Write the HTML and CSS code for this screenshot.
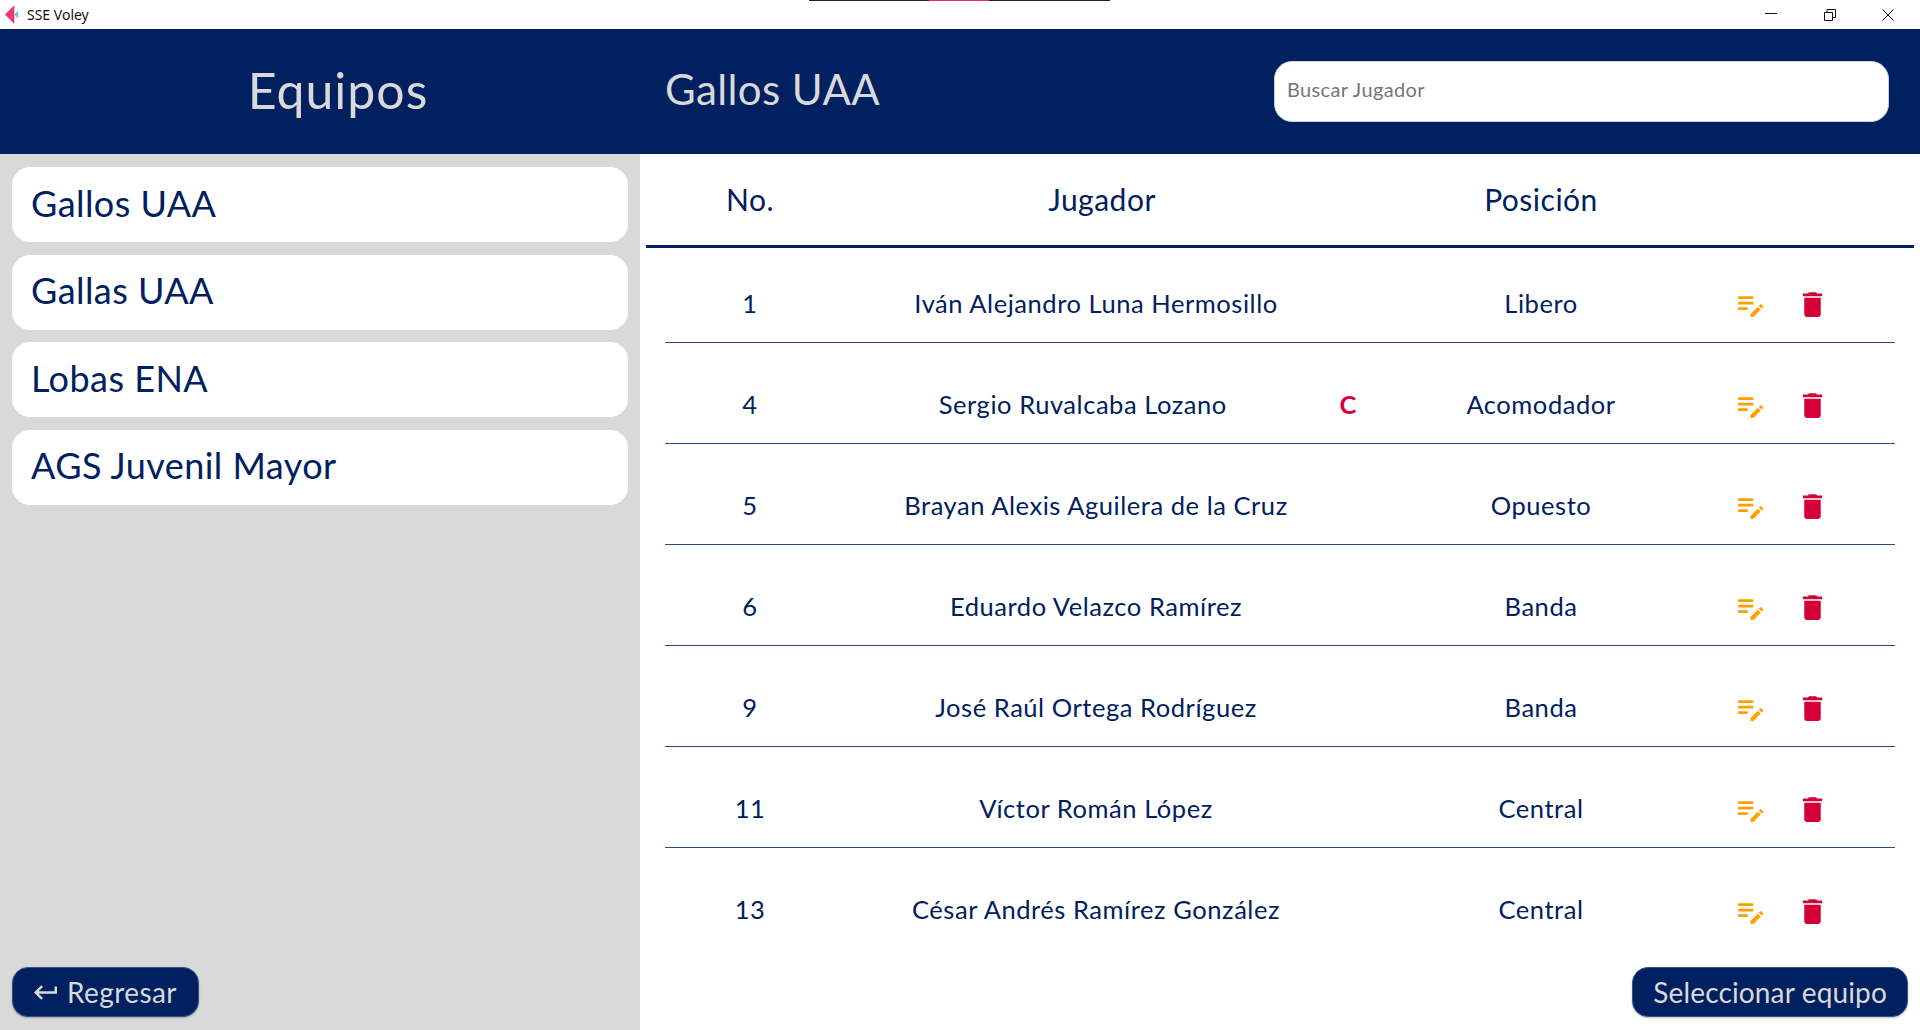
FILE: index.html
```html
<!DOCTYPE html>
<html lang="es">
<head>
  <meta charset="UTF-8" />
  <title>SSE Voley</title>
  <link rel="stylesheet" href="styles.css">
</head>
<body>
  <svg class="defs" width="0" height="0">
    <symbol id="i-edit" viewBox="0 0 24 24">
      <path d="M3 10h11v2H3zM3 8h11V6H3zM3 16h7v-2H3zM18.01 12.87l.71-.71c.39-.39 1.02-.39 1.41 0l.71.71c.39.39.39 1.02 0 1.41l-.71.71zM17.3 13.58 12 18.88V21h2.12l5.3-5.3z" />
    </symbol>
    <symbol id="i-delete" viewBox="0 0 24 24">
      <path d="M6 19c0 1.1.9 2 2 2h8c1.1 0 2-.9 2-2V7H6zM19 4h-3.5l-1-1h-5l-1 1H5v2h14z" />
    </symbol>
  </svg>

  <div class="titlebar">
    <div class="app-name">
      <svg class="app-icon" viewBox="0 0 16 20">
        <path d="M11 0v20L1 10z" fill="#f0386f" />
        <path d="M15 6v8l-4-4z" fill="#5cc3ea" />
      </svg>
      <span>SSE Voley</span>
    </div>
    <div class="progress"><span></span></div>
    <div class="win-controls">
      <svg viewBox="0 0 12 12"><path d="M0 4.500h12" /></svg>
      <svg viewBox="0 0 12 12"><path d="M.5 3.500h8v8h-8zM3 3.500V.5h8.500v8h-3" /></svg>
      <svg viewBox="0 0 12 12"><path d="M.5.5l11 11M11.500.5l-11 11" /></svg>
    </div>
  </div>

  <header class="top">
    <div class="top-left"><h1>Equipos</h1></div>
    <div class="top-right">
      <h2>Gallos UAA</h2>
      <input class="search" type="text" placeholder="Buscar Jugador" />
    </div>
  </header>

  <div class="content">
    <aside class="sidebar">
      <ul class="teams">
        <li>Gallos UAA</li>
        <li>Gallas UAA</li>
        <li>Lobas ENA</li>
        <li>AGS Juvenil Mayor</li>
      </ul>
      <div class="side-foot">
        <button class="btn btn-back">
          <svg class="back" viewBox="2 6 19 12"><path d="M19 7v4H5.830l3.580-3.590L8 6l-6 6 6 6 1.410-1.410L5.830 13H21V7z" /></svg>
          Regresar
        </button>
      </div>
    </aside>

    <main class="roster">
      <div class="thead">
        <div>No.</div>
        <div>Jugador</div>
        <div>Posición</div>
      </div>
      <div class="rows">
        <div class="row">
          <div class="cell">1</div>
          <div class="cell">Iván Alejandro Luna Hermosillo</div>
          <div class="cell">Libero</div>
          <div class="actions">
            <svg class="edit"><use href="#i-edit" /></svg>
            <svg class="delete"><use href="#i-delete" /></svg>
          </div>
        </div>
        <div class="row">
          <div class="cell">4</div>
          <div class="cell player">
            <span class="player-name">Sergio Ruvalcaba Lozano</span>
            <span class="captain">C</span>
          </div>
          <div class="cell">Acomodador</div>
          <div class="actions">
            <svg class="edit"><use href="#i-edit" /></svg>
            <svg class="delete"><use href="#i-delete" /></svg>
          </div>
        </div>
        <div class="row">
          <div class="cell">5</div>
          <div class="cell">Brayan Alexis Aguilera de la Cruz</div>
          <div class="cell">Opuesto</div>
          <div class="actions">
            <svg class="edit"><use href="#i-edit" /></svg>
            <svg class="delete"><use href="#i-delete" /></svg>
          </div>
        </div>
        <div class="row">
          <div class="cell">6</div>
          <div class="cell">Eduardo Velazco Ramírez</div>
          <div class="cell">Banda</div>
          <div class="actions">
            <svg class="edit"><use href="#i-edit" /></svg>
            <svg class="delete"><use href="#i-delete" /></svg>
          </div>
        </div>
        <div class="row">
          <div class="cell">9</div>
          <div class="cell">José Raúl Ortega Rodríguez</div>
          <div class="cell">Banda</div>
          <div class="actions">
            <svg class="edit"><use href="#i-edit" /></svg>
            <svg class="delete"><use href="#i-delete" /></svg>
          </div>
        </div>
        <div class="row">
          <div class="cell">11</div>
          <div class="cell">Víctor Román López</div>
          <div class="cell">Central</div>
          <div class="actions">
            <svg class="edit"><use href="#i-edit" /></svg>
            <svg class="delete"><use href="#i-delete" /></svg>
          </div>
        </div>
        <div class="row last">
          <div class="cell">13</div>
          <div class="cell">César Andrés Ramírez González</div>
          <div class="cell">Central</div>
          <div class="actions">
            <svg class="edit"><use href="#i-edit" /></svg>
            <svg class="delete"><use href="#i-delete" /></svg>
          </div>
        </div>
      </div>
      <div class="roster-foot">
        <button class="btn">Seleccionar equipo</button>
      </div>
    </main>
  </div>
</body>
</html>
```

FILE: styles.css
```css
* {
  box-sizing: border-box;
}
html, body {
  height: 100%;
}
body {
  margin: 0;
  display: flex;
  flex-direction: column;
  overflow: hidden;
  background-color: #fff;
  color: #002060;
  font-family: "Lato", "Noto Sans", sans-serif;
}
.defs {
  position: absolute;
}

/* barra de la ventana */
.titlebar {
  position: relative;
  height: 29px;
  flex: none;
  display: flex;
  justify-content: space-between;
  align-items: center;
}
.app-name {
  display: flex;
  align-items: center;
  gap: 8px;
  padding-left: 4px;
  color: #111;
  font-family: "Noto Sans", sans-serif;
  font-size: 14px;
}
.app-icon {
  width: 15px;
  height: 19px;
}
.progress {
  position: absolute;
  top: 0;
  left: 809px;
  width: 301px;
  height: 1px;
  background-color: #222;
}
.progress span {
  display: block;
  width: 60px;
  height: 1px;
  margin-left: 120px;
  background-color: #e22a6f;
}
.win-controls {
  display: flex;
  gap: 46.5px;
  padding-right: 26px;
}
.win-controls svg {
  width: 12px;
  height: 12px;
  fill: none;
  stroke: #111;
  stroke-width: 1;
}

/* encabezado */
.top {
  height: 125px;
  flex: none;
  display: flex;
  background-color: #002060;
  color: #d9d9d9;
}
.top-left {
  width: 640px;
  display: flex;
  justify-content: center;
  align-items: center;
  padding: 0 0 4px 36px;
}
.top-left h1 {
  margin: 0;
  font-size: 50px;
  font-weight: 400;
  letter-spacing: 1px;
}
.top-right {
  flex: 1;
  display: flex;
  justify-content: space-between;
  align-items: center;
  padding: 0 31px 0 25px;
}
.top-right h2 {
  margin: 0 0 5px;
  font-size: 42px;
  font-weight: 400;
  letter-spacing: 0.4px;
}
.search {
  width: 615px;
  height: 61px;
  padding: 0 12px 6px;
  border: 1px solid #c9d0e0;
  border-radius: 18px;
  background-color: #fff;
  font-family: inherit;
  font-size: 20px;
  letter-spacing: 0.35px;
  outline: none;
}
.search::placeholder {
  color: #757575;
}

.content {
  flex: 1;
  display: flex;
  min-height: 0;
}

/* lista de equipos */
.sidebar {
  width: 640px;
  flex: none;
  display: flex;
  flex-direction: column;
  justify-content: space-between;
  padding: 13px 12px;
  background-color: #d9d9d9;
}
.teams {
  margin: 0;
  padding: 0;
  list-style: none;
}
.teams li {
  height: 75px;
  margin-bottom: 12.5px;
  padding: 0 0 4px 19px;
  display: flex;
  align-items: center;
  border-radius: 18px;
  background-color: #fff;
  font-size: 36px;
  letter-spacing: 0.45px;
}
.btn {
  height: 50px;
  padding: 0 20px;
  display: inline-flex;
  align-items: center;
  gap: 10px;
  border: 1px solid #3a5080;
  border-radius: 16px;
  background-color: #002060;
  color: #d9d9d9;
  font-family: inherit;
  font-size: 28px;
  letter-spacing: 0.15px;
  box-shadow: 0 1px 2px rgba(0, 0, 0, 0.25);
}
.btn-back {
  padding: 0 21px;
  letter-spacing: 0.4px;
}
.back {
  width: 23px;
  height: 15px;
  fill: #d9d9d9;
}

/* tabla de jugadores */
.roster {
  flex: 1;
  display: flex;
  flex-direction: column;
  padding: 0 6px 13px;
}
.thead {
  height: 94px;
  flex: none;
  display: grid;
  grid-template-columns: 208px 496px 382px;
  align-items: center;
  text-align: center;
  border-bottom: 3px solid #002060;
  font-size: 30px;
  letter-spacing: 0.5px;
  padding-bottom: 2px;
}
.rows {
  flex: 1;
  padding: 0 19px;
}
.row {
  height: 76px;
  margin-top: 25px;
  display: grid;
  grid-template-columns: 170px 522px 368px 170px;
  align-items: center;
  text-align: center;
  border-bottom: 1.5px solid #2c4a85;
  font-size: 25.5px;
  letter-spacing: 0.55px;
}
.row:first-child {
  margin-top: 19px;
}
.row.last {
  border-bottom: none;
}
.cell {
  padding-bottom: 4px;
}
.player {
  display: flex;
  align-items: center;
}
.player-name {
  width: 498px;
}
.captain {
  margin-left: 9px;
  color: #d50037;
  font-weight: 700;
}
.actions {
  display: flex;
  align-items: center;
  gap: 29px;
  padding-left: 9px;
}
.actions svg {
  width: 33px;
  height: 33px;
}
.edit {
  fill: #ffa000;
}
.delete {
  fill: #d50037;
}
.roster-foot {
  display: flex;
  justify-content: flex-end;
  padding-right: 6px;
}
```
